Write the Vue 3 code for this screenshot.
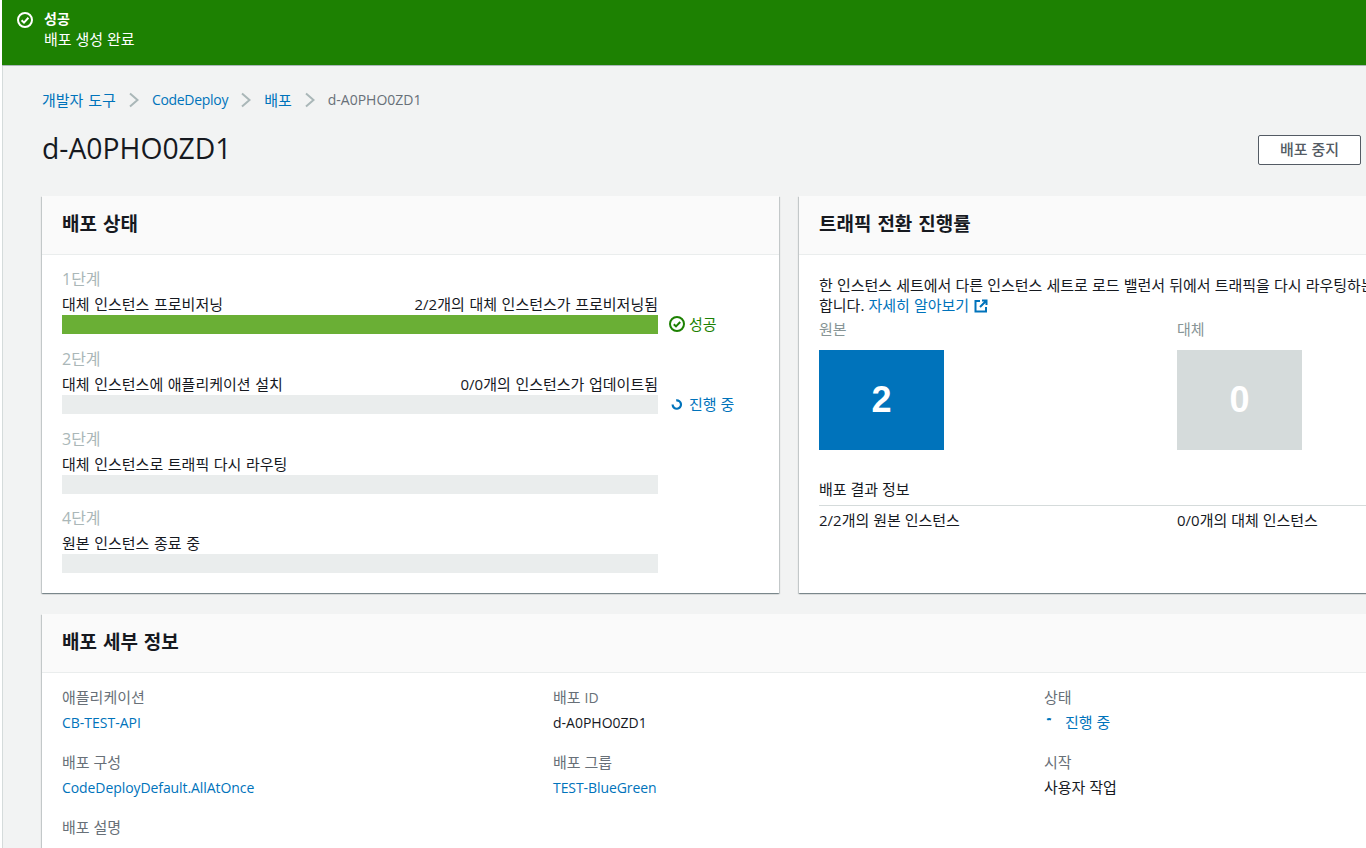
<script setup>
const crumbs = [
  { text: '개발자 도구', en: false },
  { text: 'CodeDeploy', en: true },
  { text: '배포', en: false }
]
const steps = [
  { label: '1단계', name: '대체 인스턴스 프로비저닝', info: '2/2개의 대체 인스턴스가 프로비저닝됨', fill: true, status: 'ok' },
  { label: '2단계', name: '대체 인스턴스에 애플리케이션 설치', info: '0/0개의 인스턴스가 업데이트됨', fill: false, status: 'run' },
  { label: '3단계', name: '대체 인스턴스로 트래픽 다시 라우팅', info: '', fill: false, status: '' },
  { label: '4단계', name: '원본 인스턴스 종료 중', info: '', fill: false, status: '' }
]
</script>

<template>
  <div class="page">
    <i class="tick tick-a"></i>
    <i class="tick tick-b"></i>
    <div class="banner">
      <svg class="banner-icon" width="16" height="16" viewBox="0 0 16 16" fill="none" stroke="#fff" stroke-width="2">
        <circle cx="8" cy="8" r="7" />
        <path d="M4.6 8.2 7 10.6 11.4 5.8" />
      </svg>
      <div>
        <div class="banner-title">성공</div>
        <div class="banner-text">배포 생성 완료</div>
      </div>
    </div>

    <main class="main">
      <nav class="crumbs">
        <template v-for="c in crumbs" :key="c.text">
          <a class="link" :class="{ en: c.en }">{{ c.text }}</a>
          <svg class="chev" width="10" height="16" viewBox="0 0 10 16" fill="none" stroke="#aab7b8" stroke-width="2">
            <path d="M1 1.5 8.5 8 1 14.5" />
          </svg>
        </template>
        <span class="crumb-current en">d-A0PHO0ZD1</span>
      </nav>

      <header class="head">
        <h1>d-A0PHO0ZD1</h1>
        <button class="btn">배포 중지</button>
      </header>

      <div class="cols">
        <section class="card">
          <h2 class="card-head">배포 상태</h2>
          <div class="steps">
            <div v-for="s in steps" :key="s.label" class="step">
              <div class="step-label">{{ s.label }}</div>
              <div class="step-row">
                <div class="step-main">
                  <div class="step-line">
                    <span>{{ s.name }}</span>
                    <span>{{ s.info }}</span>
                  </div>
                  <div class="bar" :class="{ done: s.fill }"></div>
                </div>
                <div v-if="s.status === 'ok'" class="status ok">
                  <svg width="16" height="16" viewBox="0 0 16 16" fill="none" stroke="#1d8102" stroke-width="2">
                    <circle cx="8" cy="8" r="7" />
                    <path d="M4.8 8.2 7 10.4 11.2 6" />
                  </svg>
                  <span>성공</span>
                </div>
                <div v-else-if="s.status === 'run'" class="status run">
                  <svg width="16" height="16" viewBox="0 0 16 16" fill="none" stroke="#0073bb" stroke-width="2.2">
                    <path d="M7.2 4.4A4.2 4.2 0 1 1 3.6 8.6" />
                  </svg>
                  <span>진행 중</span>
                </div>
              </div>
            </div>
          </div>
        </section>

        <section class="card">
          <h2 class="card-head">트래픽 전환 진행률</h2>
          <div class="traffic">
            <p class="desc">한 인스턴스 세트에서 다른 인스턴스 세트로 로드 밸런서 뒤에서 트래픽을 다시 라우팅하는 동안 기다려야<br />합니다. <a class="link">자세히 알아보기</a>
              <svg class="ext" width="14" height="14" viewBox="0 0 14 14" fill="none" stroke="#0073bb" stroke-width="2">
                <path d="M6 2H1.5v10.500h10.500V8M8 1.500h4.500V6M12.500 1.500 6 8" />
              </svg>
            </p>
            <div class="tiles">
              <div>
                <div class="muted">원본</div>
                <div class="tile blue">2</div>
              </div>
              <div>
                <div class="muted">대체</div>
                <div class="tile grey">0</div>
              </div>
            </div>
            <div class="result-title">배포 결과 정보</div>
            <div class="result-row">
              <span>2/2개의 원본 인스턴스</span>
              <span>0/0개의 대체 인스턴스</span>
            </div>
          </div>
        </section>
      </div>

      <section class="card details">
        <h2 class="card-head">배포 세부 정보</h2>
        <div class="detail-grid">
          <div class="item"><div class="key">애플리케이션</div><a class="val link en">CB-TEST-API</a></div>
          <div class="item"><div class="key">배포 <span class="en">ID</span></div><div class="val en">d-A0PHO0ZD1</div></div>
          <div class="item">
            <div class="key">상태</div>
            <div class="state">
              <svg width="12" height="12" viewBox="0 0 12 12" fill="none" stroke="#0073bb" stroke-width="2">
                <path d="M3.200 3.800C4.400 2.800 5.800 2.800 7 3.600" />
              </svg>
              <a class="link">진행 중</a>
            </div>
          </div>
          <div class="item"><div class="key">배포 구성</div><a class="val link en tight">CodeDeployDefault.AllAtOnce</a></div>
          <div class="item"><div class="key">배포 그룹</div><a class="val link en tight">TEST-BlueGreen</a></div>
          <div class="item"><div class="key">시작</div><div class="val ko">사용자 작업</div></div>
          <div class="item"><div class="key">배포 설명</div></div>
        </div>
      </section>
    </main>
  </div>
</template>

<style>
html, body {
  margin: 0;
  overflow: hidden;
  background: #f2f3f3;
}
</style>

<style scoped>
.page {
  position: relative;
  width: 1366px;
  height: 848px;
  overflow: hidden;
  border-left: 2px solid #fff;
  box-sizing: border-box;
  background: #f2f3f3;
  color: #16191f;
  font: 15px/20px "Open Sans", "Noto Sans CJK KR", sans-serif;
}
.en { font-size: 14px; }
.tick {
  position: absolute;
  left: -2px;
  width: 2px;
  height: 1px;
  background: #d5dbdb;
}
.tick-a { top: 80px; }
.tick-b { top: 487px; }
.banner {
  height: 66px;
  box-sizing: border-box;
  background: #1d8102;
  border-bottom: 1px solid #aab7b8;
  color: #fff;
  display: flex;
  gap: 11px;
  padding: 9px 15px;
  line-height: 20px;
}
.banner-icon { margin-top: 3px; flex: none; }
.banner-title { font-weight: 700; font-size: 14px; }
.main {
  padding: 0 0 0 39px;
  width: 1500px;
  height: 782px;
  border-left: 1px solid #d5dbdb;
}
.crumbs {
  display: flex;
  align-items: center;
  height: 20px;
  padding-top: 24px;
  gap: 13px;
  word-spacing: 1px;
}
.crumbs .link.en { letter-spacing: -0.3px; }
.link { color: #0073bb; }
.tight { letter-spacing: -0.08px; }
.chev { flex: none; }
.crumb-current { color: #687078; }
.head {
  display: flex;
  justify-content: space-between;
  align-items: center;
  width: 1319px;
  margin-top: 18px;
}
h1 {
  margin: 0;
  font-size: 28.3px;
  line-height: 40px;
  font-weight: 400;
}
.btn {
  width: 103px;
  height: 30px;
  margin-top: 4px;
  background: #fff;
  border: 1px solid #545b64;
  border-radius: 2px;
  color: #545b64;
  font: 500 15px/20px "Open Sans", "Noto Sans CJK KR", sans-serif;
  padding: 0 0 2px;
}
.cols {
  display: grid;
  grid-template-columns: 737px 737px;
  gap: 20px;
  margin-top: 28px;
}
.card {
  background: #fff;
  box-shadow: 0 1px 1px 0 rgba(0, 28, 36, 0.3), 1px 1px 1px 0 rgba(0, 28, 36, 0.15), -1px 1px 1px 0 rgba(0, 28, 36, 0.15);
  height: 397px;
}
.card-head {
  margin: 0;
  height: 59px;
  box-sizing: border-box;
  padding: 0 20px 3px;
  display: flex;
  align-items: center;
  background: #fafafa;
  border-bottom: 1px solid #eaeded;
  font-size: 19px;
  font-weight: 700;
  line-height: 24px;
  word-spacing: 1px;
}
.steps { padding: 13px 20px 0; }
.step { height: 80px; }
.step:nth-child(3) { height: 79px; }
.step-label { color: #aab7b8; line-height: 22px; font-size: 16px; }
.step-row { display: flex; width: 700px; }
.step-main { width: 596px; flex: none; }
.step-line {
  display: flex;
  justify-content: space-between;
  line-height: 22px;
  margin-top: 3px;
  word-spacing: 0.7px;
}
.bar { height: 19px; background: #eaeded; }
.bar.done { background: #6aaf35; }
.status {
  display: flex;
  align-items: center;
  gap: 4px;
  margin-left: 11px;
  height: 20px;
  align-self: flex-end;
}
.status.ok { color: #1d8102; }
.status.run { color: #0073bb; }
.traffic { padding: 0 20px; }
.desc {
  margin: 0;
  padding-top: 20px;
  white-space: nowrap;
  line-height: 20px;
  word-spacing: 0.2px;
}
.ext { vertical-align: -2px; margin-left: 5px; }
.tiles {
  display: grid;
  grid-template-columns: 358px 358px;
  margin-top: 4px;
}
.muted { color: #879596; line-height: 20px; }
.tile {
  width: 125px;
  height: 100px;
  margin-top: 11px;
  display: flex;
  align-items: center;
  justify-content: center;
  color: #fff;
  font: 700 36px/1 "Liberation Sans", sans-serif;
}
.tile.blue { background: #0073bb; }
.tile.grey { background: #d5dbdb; }
.result-title { margin-top: 29px; line-height: 20px; }
.result-row {
  display: grid;
  grid-template-columns: 358px 358px;
  border-top: 1px solid #d5dbdb;
  margin-top: 6px;
  padding-top: 4px;
}
.details {
  margin-top: 21px;
  width: 1500px;
  height: 400px;
}
.detail-grid {
  display: grid;
  grid-template-columns: 491px 491px 400px;
  padding: 14px 20px 0;
  row-gap: 19px;
}
.item { min-height: 46px; }
.key { color: #687078; margin-bottom: 6px; height: 20px; line-height: 20px; }
.val { display: block; height: 20px; line-height: 20px; }
.ko { margin-top: -1px; }
.state {
  display: flex;
  gap: 9px;
  align-items: center;
  height: 20px;
  margin-top: -1px;
}
</style>
